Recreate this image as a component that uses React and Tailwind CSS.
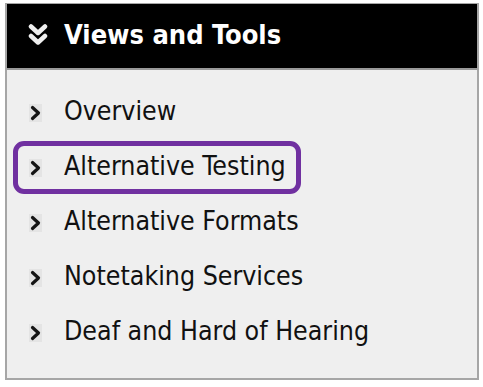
const ITEMS = [
  "Overview",
  "Alternative Testing",
  "Alternative Formats",
  "Notetaking Services",
  "Deaf and Hard of Hearing",
];

function DoubleChevron() {
  return (
    <svg width="20" height="26" viewBox="0 0 20 26" className="blur-[0.5px]">
      <path d="M3 3.5 L10 10 L17 3.5" fill="none" stroke="#efefef" strokeWidth="4.5" strokeLinecap="round" strokeLinejoin="round" />
      <path d="M3 13 L10 19.5 L17 13" fill="none" stroke="#efefef" strokeWidth="4.5" strokeLinecap="round" strokeLinejoin="round" />
    </svg>
  );
}

function Chevron() {
  return (
    <span className="w-[13px] h-[18px] bg-[#e4e4e4] flex items-center justify-center">
      <svg width="11" height="16" viewBox="0 0 11 16">
        <path d="M2.5 2.5 L8.5 8 L2.5 13.5" fill="none" stroke="#151515" strokeWidth="3.2" strokeLinecap="round" strokeLinejoin="round" />
      </svg>
    </span>
  );
}

export default function App() {
  return (
    <div className="w-[483px] h-[387px] bg-white pt-[3px] pl-[5px]" style={{ fontFamily: '"DejaVu Sans Condensed", "DejaVu Sans", sans-serif' }}>
      <div className="w-[474px] h-[377px] border-l-2 border-r-2 border-b-2 border-t border-[#a6a6a6] bg-[#efefef] flex flex-col">
        <div className="h-[66px] bg-black border-b-2 border-[#9a9a9a] flex items-center pl-[21px] gap-[16px]">
          <DoubleChevron />
          <span className="text-white font-bold text-[27px] pb-[1px]">Views and Tools</span>
        </div>
        <ul className="flex flex-col gap-[2px] pt-[16px] pl-[6px]">
          {ITEMS.map((item, i) => (
            <li
              key={item}
              className={`h-[53px] flex items-center pl-[11px] gap-[22px] border-[5px] rounded-[11px] ${i === 1 ? "w-[288px] border-[#7030a0]" : "w-fit border-transparent"}`}
            >
              <Chevron />
              <span className="text-[26.5px] text-[#111] pb-[3px]">{item}</span>
            </li>
          ))}
        </ul>
      </div>
    </div>
  );
}
